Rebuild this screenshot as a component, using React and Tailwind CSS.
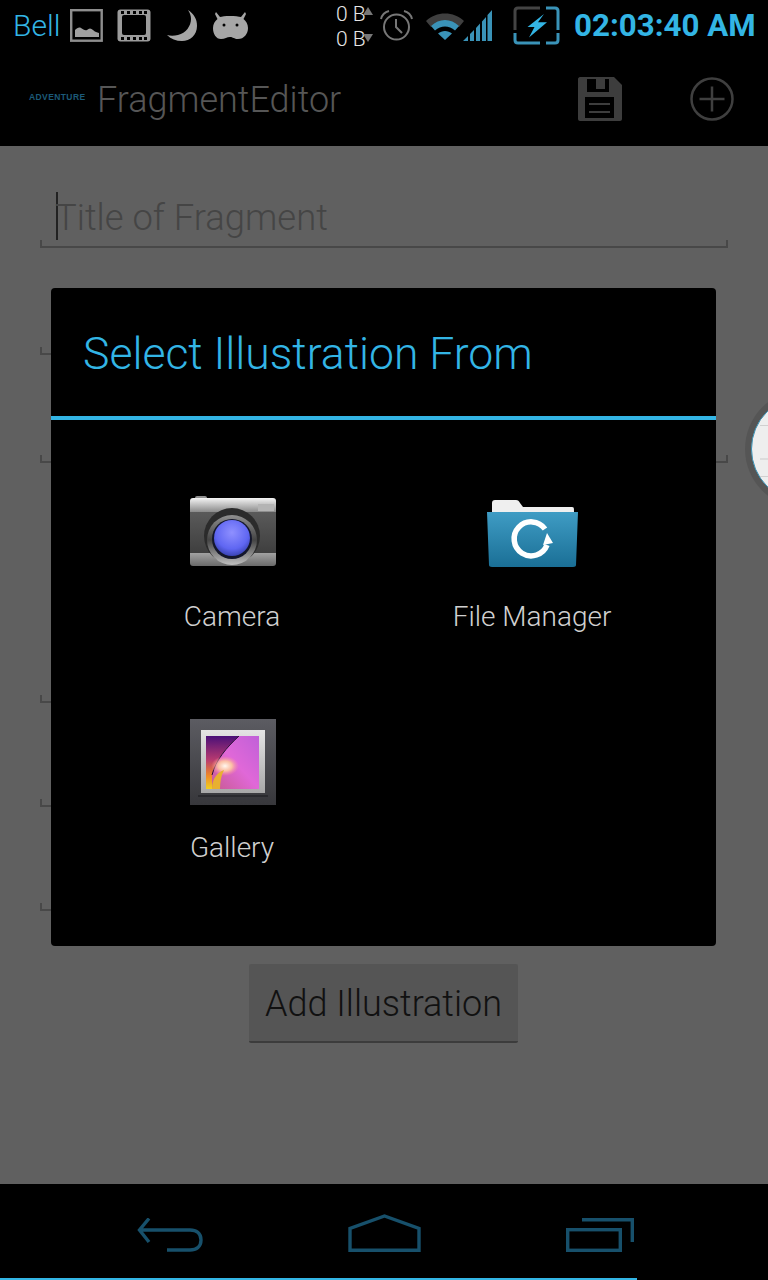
const font = { fontFamily: 'Roboto, "Liberation Sans", sans-serif' };

function Field({ className, wide }) {
  return (
    <div className={`${className} h-[8px] border-b-2 border-l-2 border-[#484848] ${wide ? "border-r-2 w-[688px]" : "w-[300px]"}`} />
  );
}

function ImgIcon() {
  return (
    <svg width="33" height="33" viewBox="0 0 33 33" className="ml-[8px] shrink-0">
      <rect x="1.2" y="1.2" width="30.5" height="30.5" fill="none" stroke="#8e8e8e" strokeWidth="2.4" />
      <path d="M5 28V21C7 19 9 18 11 19C13 20 15 22 17 21C19 19 21 19 23 21C25 23 27 23 29 24V28Z" fill="#a0a0a0" />
    </svg>
  );
}
function FilmIcon() {
  return (
    <svg width="34" height="33" viewBox="0 0 34 33" className="ml-[14px] shrink-0">
      <rect width="33" height="32" x="0.5" y="0.5" rx="3" fill="#9c9c9c" />
      <rect x="5" y="6" width="24" height="20" rx="2" fill="#000" />
      {[4, 10, 16, 22, 27].map((x) => (
        <g key={x}>
          <rect x={x} y="2" width="3" height="3" fill="#000" />
          <rect x={x} y="28" width="3" height="3" fill="#000" />
        </g>
      ))}
    </svg>
  );
}
function MoonIcon() {
  return (
    <svg width="31" height="32" viewBox="0 0 31 32" className="ml-[16px] shrink-0">
      <path d="M21 0C27 4 30 9 30 16C30 25 23 31 15 31C9 31 4 29 0 25C3 26 7 26 11 25C19 23 24 16 24 9C24 6 23 3 21 0Z" fill="#a6a6a6" />
    </svg>
  );
}
function DroidIcon() {
  return (
    <svg width="35" height="28" viewBox="0 0 35 28" className="ml-[15px] shrink-0">
      <path d="M3 0L7 5C10 3.500 24 3.500 28 5L32 0L33 2L30.500 7C33 9 35 12 35 16C35 22 31 27 25 27C21 27 20 25 17 25C14 25 12 27 8 27C3 27 0 22 0 16C0 12 2 9 4.500 7L2 2Z" fill="#a6a6a6" />
      <circle cx="11" cy="13" r="1.500" fill="#000" />
      <circle cx="24" cy="13" r="1.500" fill="#000" />
    </svg>
  );
}
function AlarmIcon() {
  return (
    <svg width="33" height="31" viewBox="0 0 33 31" className="shrink-0">
      <circle cx="16.500" cy="17" r="12.500" fill="none" stroke="#777" strokeWidth="2" />
      <path d="M16 9V17L22 23" fill="none" stroke="#777" strokeWidth="2" />
      <path d="M1 9C2 5 5 2 9 1M32 9C31 5 28 2 24 1" fill="none" stroke="#777" strokeWidth="2" />
    </svg>
  );
}
function WifiIcon() {
  return (
    <svg width="38" height="31" viewBox="0 0 38 31" className="shrink-0">
      <path d="M0 11C10 1 28 1 38 11L33 17C25 9 13 9 5 17Z" fill="#3f3f3f" />
      <path d="M5 16C13 8 25 8 33 16L29 20.500C23 15 15 15 9 20.500Z" fill="#3a93b8" />
      <path d="M12 23.500C16 20 22 20 26 23.500L19 30Z" fill="#3a93b8" />
    </svg>
  );
}
function SignalIcon() {
  return (
    <svg width="29" height="32" viewBox="0 0 29 32" className="shrink-0">
      <path d="M0 31L5 26V31ZM7 24L11 20V31H7ZM13 18L17 13.500V31H13ZM19 11.500L23 7V31H19ZM24.500 5L29 0V31H24.500Z" fill="#3a93b8" />
    </svg>
  );
}
function BatteryIcon() {
  return (
    <svg width="47" height="39" viewBox="0 0 47 39" className="shrink-0">
      <path d="M27 2H5C3 2 2 3 2 5V24" fill="none" stroke="#444" strokeWidth="3" />
      <path d="M2 27V34C2 36 3 37 5 37H27" fill="none" stroke="#3a93b8" strokeWidth="3" />
      <path d="M33 37H42C44 37 45 36 45 34V27" fill="none" stroke="#3a93b8" strokeWidth="3" />
      <path d="M33 2H42C44 2 45 3 45 5V24" fill="none" stroke="#3a93b8" strokeWidth="3" />
      <path d="M31 8L14.500 21H21.500L16 31.500L34 16.200H25Z" fill="#33b5e5" />
    </svg>
  );
}
function SaveIcon() {
  return (
    <svg width="44" height="44" viewBox="0 0 44 44" className="shrink-0">
      <path d="M0 2C0 1 1 0 2 0H36L44 8V42C44 43 43 44 42 44H2C1 44 0 43 0 42Z" fill="#3d3d3d" />
      <rect x="9" y="2" width="22" height="13" fill="#000" />
      <rect x="18" y="2" width="9" height="10" fill="#3d3d3d" />
      <rect x="7" y="20" width="29" height="21" fill="#000" />
      <path d="M11 27H32M11 35H32" stroke="#3d3d3d" strokeWidth="2" />
    </svg>
  );
}
function PlusIcon() {
  return (
    <svg width="44" height="44" viewBox="0 0 44 44" className="shrink-0">
      <circle cx="22" cy="22" r="20.500" fill="none" stroke="#3f3f3f" strokeWidth="2.500" />
      <path d="M22 9.500V34.500M9.500 22H34.500" stroke="#3f3f3f" strokeWidth="2.500" />
    </svg>
  );
}

function CameraIcon() {
  return (
    <svg width="90" height="76" viewBox="0 0 90 76">
      <defs>
        <linearGradient id="camplate" x1="0" y1="0" x2="0" y2="1">
          <stop offset="0" stopColor="#f4f4f4" />
          <stop offset="1" stopColor="#8a8a8a" />
        </linearGradient>
        <linearGradient id="cambody" x1="0" y1="0" x2="0" y2="1">
          <stop offset="0" stopColor="#5a5a5a" />
          <stop offset="1" stopColor="#3e3e3e" />
        </linearGradient>
        <linearGradient id="camlow" x1="0" y1="0" x2="0" y2="1">
          <stop offset="0" stopColor="#a2a2a2" />
          <stop offset="1" stopColor="#6a6a6a" />
        </linearGradient>
        <linearGradient id="camring" x1="0" y1="0" x2="0" y2="1">
          <stop offset="0" stopColor="#8f8f8f" />
          <stop offset="0.5" stopColor="#444" />
          <stop offset="1" stopColor="#c0c0c0" />
        </linearGradient>
        <radialGradient id="lens" cx="0.5" cy="0.35" r="0.65">
          <stop offset="0" stopColor="#8f90ff" />
          <stop offset="0.7" stopColor="#5f66f2" />
          <stop offset="1" stopColor="#3a44b4" />
        </radialGradient>
      </defs>
      <rect x="8" y="2" width="12" height="5" rx="2" fill="#909090" />
      <path d="M3 7C3 5 4 4 6 4H86C88 4 89 5 89 7V18H3Z" fill="url(#camplate)" />
      <rect x="71" y="10" width="16" height="7" fill="#b4b4b4" />
      <rect x="3" y="18" width="86" height="42" fill="url(#cambody)" />
      <path d="M3 59H89V69C89 71 88 72 86 72H6C4 72 3 71 3 69Z" fill="url(#camlow)" />
      <circle cx="45" cy="42" r="28" fill="#2b2b2b" />
      <circle cx="45" cy="46" r="25" fill="url(#camring)" />
      <circle cx="45" cy="45" r="20" fill="#14172c" />
      <circle cx="45" cy="44" r="18" fill="url(#lens)" />
    </svg>
  );
}
function FolderIcon() {
  return (
    <svg width="94" height="76" viewBox="0 0 94 76">
      <defs>
        <linearGradient id="fold" x1="0" y1="0" x2="0" y2="1">
          <stop offset="0" stopColor="#3f9cc4" />
          <stop offset="1" stopColor="#1a6f96" />
        </linearGradient>
      </defs>
      <path d="M7 9C7 7 8 6 10 6H31C33 6 34 7 35 9L38 13H87C89 13 89 14 89 18H7Z" fill="#efefef" />
      <path d="M2 18H93L91 71C91 72 90 73 88 73H7C5 73 4 72 4 71Z" fill="url(#fold)" />
      <path d="M60 35A17 17 0 1 0 62 51" fill="none" stroke="#fff" strokeWidth="5.500" />
      <path d="M62 39L68 49L58 51Z" fill="#fff" />
    </svg>
  );
}
function GalleryIcon() {
  return (
    <svg width="88" height="88" viewBox="0 0 88 88" className="-mb-[5px]">
      <defs>
        <linearGradient id="gframe" x1="0" y1="0" x2="0" y2="1">
          <stop offset="0" stopColor="#5c5c62" />
          <stop offset="1" stopColor="#37373b" />
        </linearGradient>
        <linearGradient id="gmat" x1="0" y1="0" x2="0" y2="1">
          <stop offset="0" stopColor="#e4e4e4" />
          <stop offset="1" stopColor="#a8a8a8" />
        </linearGradient>
        <linearGradient id="gleft" x1="0" y1="0" x2="0" y2="1">
          <stop offset="0" stopColor="#4a1078" />
          <stop offset="0.45" stopColor="#b83a70" />
          <stop offset="0.75" stopColor="#f08a28" />
          <stop offset="1" stopColor="#f0d020" />
        </linearGradient>
        <linearGradient id="gpink" x1="0" y1="1" x2="1" y2="0">
          <stop offset="0" stopColor="#c85a90" />
          <stop offset="0.5" stopColor="#e068d8" />
          <stop offset="1" stopColor="#c060d8" />
        </linearGradient>
        <radialGradient id="ghigh">
          <stop offset="0" stopColor="#fff8f0" />
          <stop offset="0.5" stopColor="#ffc8a0" stopOpacity="0.9" />
          <stop offset="1" stopColor="#ff90a0" stopOpacity="0" />
        </radialGradient>
      </defs>
      <rect x="2" y="1" width="86" height="86" fill="url(#gframe)" />
      <rect x="13" y="12" width="64" height="63" fill="url(#gmat)" />
      <rect x="18" y="18" width="53" height="53" fill="url(#gleft)" />
      <path d="M51 18H71V71H24V57C28 42 38 30 51 18Z" fill="url(#gpink)" />
      <path d="M51 18C38 30 28 42 24 57" fill="none" stroke="#2a1038" strokeWidth="1" />
      <ellipse cx="37" cy="48" rx="14" ry="10" fill="url(#ghigh)" />
      <path d="M24 71C24 60 30 54 36 52C33 58 32 64 32 71Z" fill="#e8b030" />
      <rect x="10" y="77" width="70" height="2" fill="#2a2a2e" />
    </svg>
  );
}

function BackIcon() {
  return (
    <svg width="66" height="34" viewBox="0 0 66 34" className="shrink-0">
      <path d="M12 0.500L2.500 12L12 24M2.500 12H53C59 12 64 15 64 22C64 29 59 32 53 32H30" fill="none" stroke="#17506b" strokeWidth="3.400" />
    </svg>
  );
}
function HomeIcon() {
  return (
    <svg width="73" height="38" viewBox="0 0 73 38" className="shrink-0">
      <path d="M2 36.300V14.500L36.500 2L71 14.500V36.300Z" fill="none" stroke="#17506b" strokeWidth="3.400" />
    </svg>
  );
}
function RecentsIcon() {
  return (
    <svg width="68" height="34" viewBox="0 0 68 34" className="shrink-0">
      <rect x="1.700" y="11.700" width="52.600" height="20.600" fill="none" stroke="#17506b" strokeWidth="3.400" />
      <path d="M16 1.700H66.300V24" fill="none" stroke="#17506b" strokeWidth="3.400" />
    </svg>
  );
}

function Option({ icon, label }) {
  return (
    <div className="h-[231px] flex flex-col items-center">
      <div className="h-[106px] flex items-end justify-center">{icon}</div>
      <div className="mt-[31px] text-[28px] leading-[32px] font-light text-[#d0d0d0]">{label}</div>
    </div>
  );
}

export default function App() {
  return (
    <div className="relative w-[768px] h-[1280px] overflow-hidden flex flex-col bg-[#606060]" style={font}>
      <div className="h-[146px] shrink-0 bg-black flex flex-col">
        <div className="h-[51px] flex items-center pl-[13px]">
          <span className="text-[30px] leading-[34px] font-light text-[#33b5e5] w-[49px]">Bell</span>
          <ImgIcon />
          <FilmIcon />
          <MoonIcon />
          <DroidIcon />
          <div className="ml-[88px] mt-[2px] w-[37px] flex flex-col text-[21px] leading-[25px] font-light text-[#e6e6e6]">
            <div className="flex items-start">
              <span className="w-[27px] whitespace-nowrap">0 B</span>
              <span className="mt-[5px] w-0 h-0 border-x-[5px] border-x-transparent border-b-[8px] border-b-[#777]" />
            </div>
            <div className="flex items-start">
              <span className="w-[27px] whitespace-nowrap">0 B</span>
              <span className="mt-[7px] w-0 h-0 border-x-[5px] border-x-transparent border-t-[8px] border-t-[#777]" />
            </div>
          </div>
          <div className="ml-[7px]"><AlarmIcon /></div>
          <div className="ml-[13px]"><WifiIcon /></div>
          <div className="-ml-px"><SignalIcon /></div>
          <div className="ml-[21px]"><BatteryIcon /></div>
          <span className="ml-[14px] text-[31.300px] leading-[34px] font-bold text-[#33b5e5] whitespace-nowrap">02:03:40 AM</span>
        </div>
        <div className="flex-1 flex items-center pl-[29px]">
          <span className="w-[68px] text-[8.500px] font-bold tracking-[0.4px] text-[#1c5a78] font-['Liberation_Sans'] mb-[3px]">ADVENTURE</span>
          <span className="mt-[3px] text-[36px] leading-[44px] font-light text-[#565656]">FragmentEditor</span>
          <div className="ml-auto mr-[34px] flex items-center gap-[68px]">
            <SaveIcon />
            <PlusIcon />
          </div>
        </div>
      </div>

      <div className="flex-1 flex flex-col">
        <div className="ml-[56px] mt-[46px] h-[48px] flex items-start">
          <div className="w-[2px] h-[48px] bg-[#222] shrink-0" />
          <span className="-ml-[3px] mt-[2px] text-[36.400px] leading-[48px] font-light text-[#454545]">Title of Fragment</span>
        </div>
        <Field className="ml-[40px]" wide />
        <Field className="ml-[40px] mt-[99px]" />
        <Field className="ml-[40px] mt-[100px]" wide />
        <Field className="ml-[40px] mt-[232px]" />
        <Field className="ml-[40px] mt-[96px]" />
        <Field className="ml-[40px] mt-[96px]" />
        <div className="self-center ml-[-1px] mt-[53px] w-[269px] h-[79px] pt-[3px] bg-[#555555] border-b-2 border-[#3c3c3c] rounded-[2px] flex items-center justify-center text-[36px] leading-[44px] font-light text-[#111]">
          Add Illustration
        </div>
      </div>

      <div className="relative h-[96px] shrink-0 bg-black flex items-start pt-[34px]">
        <div className="ml-[137px]"><BackIcon /></div>
        <div className="ml-[145px] -mt-[4px]"><HomeIcon /></div>
        <div className="ml-[145px]"><RecentsIcon /></div>
        <div className="absolute left-0 bottom-0 w-[637px] h-[2px] bg-[#33b5e5]" />
      </div>

      <div className="absolute left-[51px] top-[288px] w-[665px] h-[658px] bg-black rounded-[4px] flex flex-col">
        <div className="h-[128px] shrink-0 pl-[32px] pt-[4px] flex items-center text-[44.500px] leading-[50px] font-light text-[#33b5e5]">
          Select Illustration From
        </div>
        <div className="h-[4px] shrink-0 bg-[#33b5e5]" />
        <div className="pl-[31px] grid grid-cols-[300px_300px] pt-[44px]">
          <Option icon={<CameraIcon />} label="Camera" />
          <Option icon={<FolderIcon />} label="File Manager" />
          <Option icon={<GalleryIcon />} label="Gallery" />
        </div>
      </div>

      <div className="absolute left-[745px] top-[390px] w-[118px] h-[118px] rounded-full bg-[#555] flex items-center justify-center">
        <div className="w-[106px] h-[106px] rounded-full bg-[#eeeeee] border border-[#3a93b8] flex flex-col pl-[8px] pt-[28px]">
          <div className="h-px w-[60px] bg-[#d0d0d0]" />
          <div className="mt-[32px] h-[2px] w-[60px] bg-[#dcdcdc]" />
          <div className="mt-[16px] h-px w-[60px] bg-[#d0d0d0]" />
        </div>
      </div>
    </div>
  );
}
